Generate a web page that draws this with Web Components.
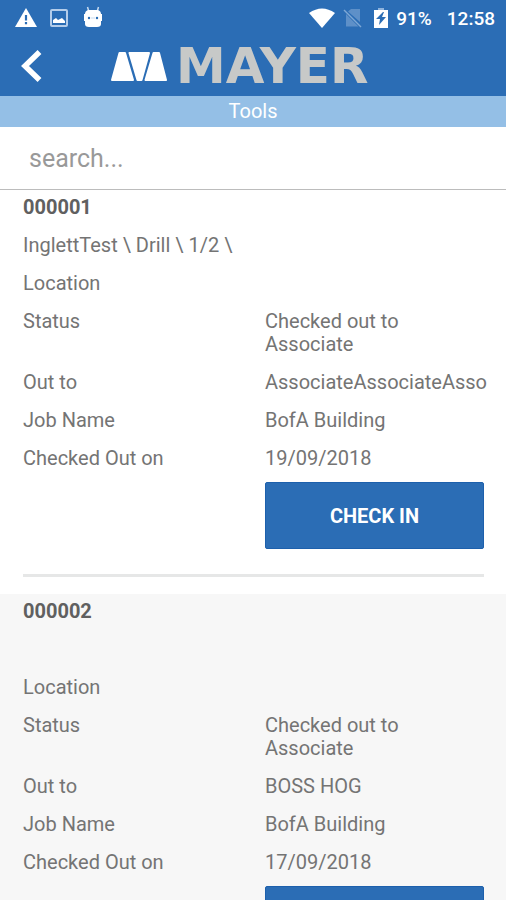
<!DOCTYPE html>
<html lang="en">
<head>
<meta charset="utf-8">
<meta name="viewport" content="width=device-width, initial-scale=1">
<title>Tools</title>
<style>
  body { margin: 0; background: #fff; color: #747474; font-family: Roboto, "Liberation Sans", sans-serif; font-size: 20px; line-height: 23px; --brand: #2b6db5; }
</style>
</head>
<body>
<tools-screen></tools-screen>

<template id="status-bar">
  <style>
    :host { display: flex; align-items: center; justify-content: space-between; height: 36px; padding: 0 11px 0 15px; background: var(--brand); color: #fff; font-weight: 500; font-size: 19px; }
    div { display: flex; align-items: center; }
    svg { display: block; }
    .left { gap: 12px; }
    .sim { margin-left: 8px; }
    .battery { margin-left: 10px; }
    .pct { margin-left: 7px; }
    time { margin-left: 15px; }
  </style>
  <div class="left">
    <svg width="22" height="20" viewBox="0 0 22 20"><path fill="#fff" d="M11 0 22 19H0Z"/><path fill="#2b6db5" d="M9.900 7h2.200v5.500H9.900zM9.900 14h2.200v2.200H9.900z"/></svg>
    <svg width="20" height="20" viewBox="0 0 20 20"><rect x="2" y="2" width="16" height="16" rx="1" fill="none" stroke="#b4cdea" stroke-width="2"/><path fill="#fff" d="M4 15v-3l3-2 2 2 4-2 3 3v2z"/></svg>
    <svg width="24" height="24" viewBox="0 0 24 24"><path d="M8 6 6.500 1M16 6l1.500-5" stroke="#c9dcf0" stroke-width="1.500"/><path fill="#fff" d="M7 4h10q3 1 3 4h1v7h-1v3q0 3-4 3H8q-4 0-4-3v-3H3V8h1q0-3 3-4z"/><circle cx="8" cy="12" r="1.200" fill="#2b6db5"/><circle cx="16" cy="12" r="1.200" fill="#2b6db5"/><path d="M10 12h4" stroke="#c9dcf0"/></svg>
  </div>
  <div>
    <svg width="26" height="20" viewBox="0 0 26 20"><path fill="#fff" d="M0 5Q13-4 26 5L13 20Z"/></svg>
    <svg class="sim" width="20" height="20" viewBox="0 0 20 20"><path fill="#5e90c8" d="M8 1h9v13L5 3.500zM3 6l12.500 12.500H3z"/><path d="m1 2 17 17" stroke="#7ea8d5" stroke-width="1.500"/></svg>
    <svg class="battery" width="16" height="22" viewBox="0 0 16 22"><path fill="#8fb3dc" d="M5 1h6v2H5z"/><path fill="#fff" d="M1 3h14v18H1z"/><path fill="#2b6db5" d="m10 5-7 7h4l-1 6 7-8H9l2-5z"/></svg>
    <span class="pct">91%</span><time>12:58</time>
  </div>
</template>

<template id="brand-header">
  <style>
    :host { display: flex; align-items: center; height: 60px; padding-left: 21px; background: var(--brand); }
    button { border: 0; padding: 0; background: none; display: block; }
    svg { display: block; }
    .logo { display: flex; align-items: center; gap: 9px; margin-left: 69px; color: #c7c9c8; font: bold 50px/50px "DejaVu Sans", sans-serif; }
  </style>
  <button type="button" aria-label="Back"><svg width="21" height="32" viewBox="0 0 21 32"><path d="M18.500 2 4 16l14.500 14" fill="none" stroke="#fff" stroke-width="5.500"/></svg></button>
  <div class="logo">
    <svg width="56" height="29" viewBox="0 0 56 29" fill="#fff" stroke="#fff" stroke-width="2" stroke-linejoin="round"><path d="M8.500 1H14l8 27H1zM18.500 1h19.500L30.500 28h-4zM42.500 1H48l7 27H34.500z"/></svg>
    <span>MAYER</span>
  </div>
</template>

<template id="search-field">
  <style>
    :host { display: block; border-bottom: 1px solid #bcbcbc; }
    input { display: block; box-sizing: border-box; width: 100%; height: 62px; padding: 0 29px; border: 0; outline: 0; background: #fff; color: #666; font: 25px/30px Roboto, sans-serif; }
    input::placeholder { color: #999; opacity: 1; }
  </style>
  <input type="search" placeholder="search..." aria-label="Search tools">
</template>

<template id="tool-field">
  <style>
    :host { display: grid; grid-template-columns: minmax(0, 1fr) minmax(0, 1fr); column-gap: 23px; padding: 6px 0 9px; }
  </style>
  <span><slot name="label"></slot></span><span><slot></slot></span>
</template>

<template id="tool-card">
  <style>
    :host { display: block; padding: 0 22px 17px 23px; }
    :host([shaded]) { background: #f7f7f7; }
    h2, p { margin: 0; padding: 6px 0 9px; min-height: 23px; font-size: inherit; }
    h2 { font-weight: 700; color: #606060; }
    .action { display: grid; grid-template-columns: 1fr 1fr; column-gap: 23px; padding: 3px 0 25px; }
    button { grid-column: 2; height: 67px; padding: 2px 0 0; border: 1px solid #1d60ac; border-radius: 2px; background: var(--brand); color: #fff; font: 700 20px/23px Roboto, sans-serif; }
    hr { margin: 0; border: 0; height: 3px; background: #e6e7e7; }
  </style>
  <h2><slot name="number"></slot></h2>
  <p><slot name="description"></slot></p>
  <slot></slot>
  <div class="action"><button type="button">CHECK IN</button></div>
  <hr>
</template>

<template id="tools-screen">
  <style>
    :host { display: flex; flex-direction: column; height: 100vh; }
    :host > * { flex: none; }
    main { flex: 1 1 0; min-height: 0; overflow: hidden auto; scrollbar-width: none; }
    h1 { margin: 0; padding: 4px 0; background: #94bfe6; color: #fff; font-size: 20px; font-weight: 400; line-height: 23px; text-align: center; }
    status-bar, brand-header, h1, search-field { flex: none; }
  </style>
  <status-bar></status-bar>
  <brand-header></brand-header>
  <h1>Tools</h1>
  <search-field></search-field>
  <main>
    <tool-card>
      <span slot="number">000001</span>
      <span slot="description">InglettTest \ Drill \ 1/2 \</span>
      <tool-field><span slot="label">Location</span></tool-field>
      <tool-field><span slot="label">Status</span>Checked out to<br>Associate</tool-field>
      <tool-field><span slot="label">Out to</span>AssociateAssociateAsso</tool-field>
      <tool-field><span slot="label">Job Name</span>BofA Building</tool-field>
      <tool-field><span slot="label">Checked Out on</span>19/09/2018</tool-field>
    </tool-card>
    <tool-card shaded>
      <span slot="number">000002</span>
      <tool-field><span slot="label">Location</span></tool-field>
      <tool-field><span slot="label">Status</span>Checked out to<br>Associate</tool-field>
      <tool-field><span slot="label">Out to</span>BOSS HOG</tool-field>
      <tool-field><span slot="label">Job Name</span>BofA Building</tool-field>
      <tool-field><span slot="label">Checked Out on</span>17/09/2018</tool-field>
    </tool-card>
  </main>
</template>

<script>
  class TemplateElement extends HTMLElement {
    constructor() {
      super();
      const template = document.getElementById(this.localName);
      this.attachShadow({ mode: "open" }).append(template.content.cloneNode(true));
    }
  }
  customElements.define("status-bar", class StatusBar extends TemplateElement {});
  customElements.define("brand-header", class BrandHeader extends TemplateElement {});
  customElements.define("search-field", class SearchField extends TemplateElement {});
  customElements.define("tool-field", class ToolField extends TemplateElement {});
  customElements.define("tool-card", class ToolCard extends TemplateElement {});
  customElements.define("tools-screen", class ToolsScreen extends TemplateElement {});
</script>
</body>
</html>
